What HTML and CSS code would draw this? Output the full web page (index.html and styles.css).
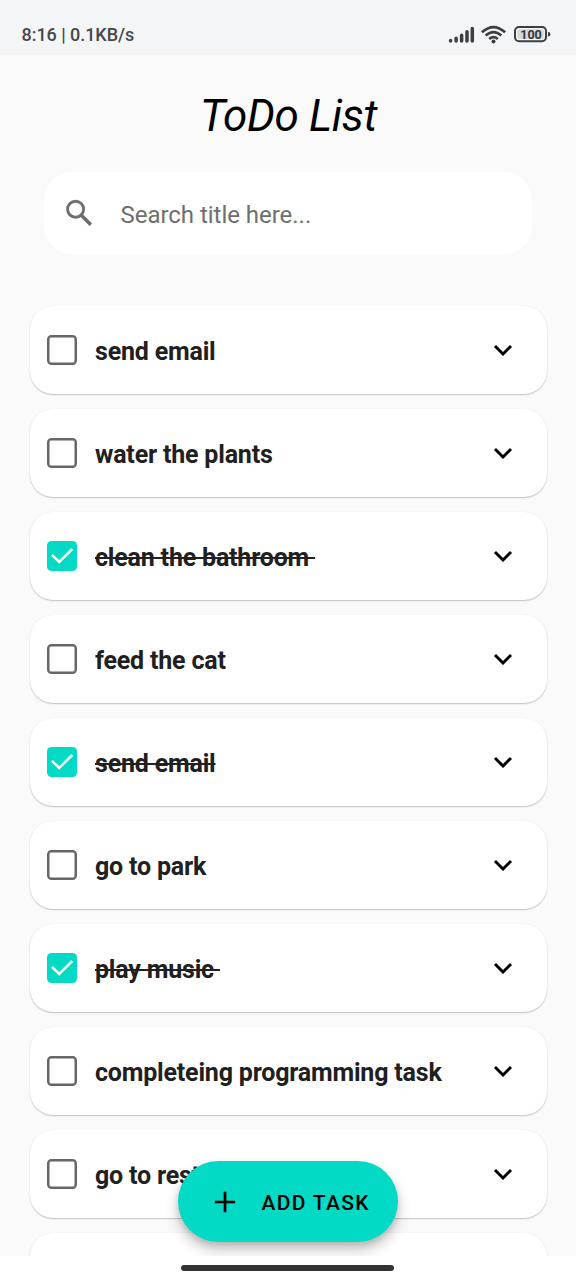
FILE: index.html
```html
<!DOCTYPE html>
<html lang="en">
<head>
<meta charset="utf-8">
<title>ToDo List</title>
<link rel="stylesheet" href="styles.css">
</head>
<body>
<svg class="defs" width="0" height="0">
  <symbol id="chevron" viewBox="0 0 20 12"><path d="M2 2 L10 10 L18 2" fill="none" stroke="#000" stroke-width="2.9"/></symbol>
  <symbol id="check" viewBox="0 0 30 30"><path d="M5 13.8 L12.2 21 L25.2 8" fill="none" stroke="#fff" stroke-width="2.5"/></symbol>
</svg>
<div class="screen">
  <header class="status">
    <span class="status-text">8:16 | 0.1KB/s</span>
    <svg class="status-icons" width="104" height="20" viewBox="0 0 104 20" fill="none">
      <g stroke="#3c3e41" stroke-width="3.5" stroke-linecap="round">
        <path d="M2.6 15.4V15.9M8.1 13.3V15.9M13.6 10.2V15.9M19 6.8V15.9M24.3 3.6V15.9"/>
      </g>
      <g stroke="#3c3e41" stroke-width="2.7">
        <path d="M33.9 7.3Q45.5 -3.2 57.1 7.3"/>
        <path d="M37.6 10.6Q45.5 3.7 53.4 10.6"/>
        <path d="M41.2 14Q45.5 10.3 49.8 14"/>
      </g>
      <circle cx="45.5" cy="16.4" r="2" fill="#3c3e41"/>
      <rect x="67" y="2" width="31" height="14.3" rx="4" stroke="#3c3e41" stroke-width="2"/>
      <rect x="69.3" y="4.3" width="26.4" height="9.7" rx="2" fill="#d6d8da"/>
      <path d="M100 7Q102.4 7 102.4 9.2Q102.4 11.4 100 11.4Z" fill="#3c3e41"/>
      <text class="battery" x="83" y="13.6" text-anchor="middle">100</text>
    </svg>
  </header>
  <main class="content">
    <h1 class="title">ToDo List</h1>
    <div class="search">
      <svg class="search-icon" width="28" height="28" viewBox="0 0 28 28" fill="none" stroke="#6e6e6e"><circle cx="9.6" cy="10.2" r="8" stroke-width="2.9"/><path d="M15.3 16.2L24.8 25.7" stroke-width="3.5"/></svg>
      <span class="placeholder">Search title here...</span>
    </div>
    <div class="list">
      <div class="card"><span class="box"></span><span class="label">send email</span><svg class="chev"><use href="#chevron"/></svg></div>
      <div class="card"><span class="box"></span><span class="label">water the plants</span><svg class="chev"><use href="#chevron"/></svg></div>
      <div class="card"><span class="box on"><svg width="30" height="30"><use href="#check"/></svg></span><span class="label done">clean the bathroom </span><svg class="chev"><use href="#chevron"/></svg></div>
      <div class="card"><span class="box"></span><span class="label">feed the cat</span><svg class="chev"><use href="#chevron"/></svg></div>
      <div class="card"><span class="box on"><svg width="30" height="30"><use href="#check"/></svg></span><span class="label done">send email</span><svg class="chev"><use href="#chevron"/></svg></div>
      <div class="card"><span class="box"></span><span class="label">go to park</span><svg class="chev"><use href="#chevron"/></svg></div>
      <div class="card"><span class="box on"><svg width="30" height="30"><use href="#check"/></svg></span><span class="label done">play music </span><svg class="chev"><use href="#chevron"/></svg></div>
      <div class="card"><span class="box"></span><span class="label">completeing programming task</span><svg class="chev"><use href="#chevron"/></svg></div>
      <div class="card"><span class="box"></span><span class="label">go to rest</span><svg class="chev"><use href="#chevron"/></svg></div>
      <div class="card"></div>
    </div>
    <div class="fab">
      <svg width="22" height="22" viewBox="0 0 22 22" stroke="#000" stroke-width="2.7"><path d="M11 .8V21.2M.8 11H21.2"/></svg>
      <span class="fab-text">ADD TASK</span>
    </div>
  </main>
  <footer class="nav"><span class="handle"></span></footer>
</div>
</body>
</html>
```
FILE: styles.css
```css
body { margin: 0; font-family: Roboto, sans-serif; }
.defs { display: block; position: absolute; }
.screen { width: 576px; height: 1280px; display: flex; flex-direction: column; overflow: hidden; background: #fafafa; }
.status { height: 55px; flex: none; box-sizing: border-box; padding: 25px 24px 0 21.5px; display: flex; justify-content: space-between; align-items: flex-start; background: #f3f5f7; }
.status-text { font-size: 18px; line-height: 20px; font-weight: 500; letter-spacing: -.05px; color: #46484b; white-space: pre; }
.battery { font: 700 12.5px Roboto, sans-serif; fill: #333538; }
.content { position: relative; height: 1201px; flex: none; overflow: hidden; background: #fafafa; }
.title { margin: 35px 0 0 1px; height: 52px; line-height: 52px; text-align: center; font-size: 44px; font-weight: 400; font-style: italic; letter-spacing: -.35px; color: #000; }
.search { margin: 30px 44px 0; height: 82px; box-sizing: border-box; padding: 0 22px; border-radius: 28px; background: #fff; display: flex; align-items: center; }
.placeholder { margin: 4px 0 0 26.5px; font-size: 24px; letter-spacing: -.03px; color: #6e6e6e; white-space: pre; }
.list { margin: 52px 29.5px 0; display: flex; flex-direction: column; gap: 15px; }
.card { height: 88px; flex: none; box-sizing: border-box; padding: 0 33.5px 0 17.5px; border-radius: 23px; background: #fff; display: flex; align-items: center; box-shadow: 0 1px 1.5px rgba(0,0,0,.22), 0 0 1.5px rgba(0,0,0,.06); }
.box { width: 30px; height: 30px; box-sizing: border-box; border: 2px solid #666; border-radius: 4.5px; flex: none; }
.box:not(.on) { box-shadow: inset 0 0 0 .5px #666; }
.box.on { border: 0; background: #03dac5; }
.box svg { display: block; }
.label { margin: 3px 0 0 18px; font-size: 25px; font-weight: 700; letter-spacing: -.19px; color: #202020; white-space: pre; }
.done { text-decoration: line-through; text-decoration-thickness: 2px; }
.chev { width: 20px; height: 12px; margin-left: auto; margin-top: 0; flex: none; }
.fab { position: absolute; left: 178px; top: 1106px; width: 220px; height: 81px; box-sizing: border-box; padding-left: 36px; border-radius: 41px; background: #03dac5; display: flex; align-items: center; box-shadow: 0 8px 14px rgba(0,0,0,.22), 0 3px 6px rgba(0,0,0,.12); }
.fab-text { margin: 2px 0 0 25.5px; font-size: 21px; font-weight: 500; letter-spacing: 1.3px; color: #000; white-space: pre; }
.nav { height: 24px; flex: none; background: #fff; display: flex; justify-content: center; align-items: flex-start; }
.handle { width: 213px; height: 6px; margin: 9px 1px 0 0; border-radius: 3px; background: #333; }
```
